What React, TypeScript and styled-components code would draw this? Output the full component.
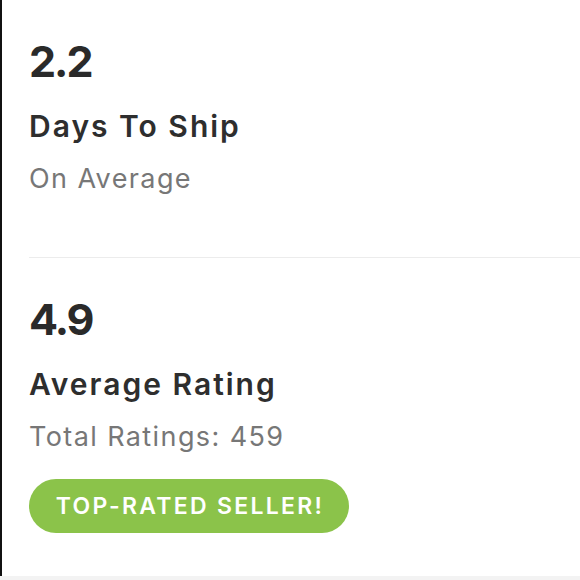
import React from "react";
import styled, { createGlobalStyle } from "styled-components";

const GlobalStyle = createGlobalStyle`
  html, body {
    margin: 0;
    padding: 0;
    background: #f3f3f3;
  }
  body {
    font-family: Inter, Lato, "Open Sans", Arial, sans-serif;
    -webkit-font-smoothing: antialiased;
  }
`;

const Card = styled.div`
  width: 578px;
  height: 576px;
  background: #ffffff;
  border-left: 2px solid #111111;
  display: flex;
  flex-direction: column;
`;

const Section = styled.section<{ $bottom: number }>`
  padding: 39px 0 ${(p) => p.$bottom}px 27px;
  display: flex;
  flex-direction: column;
  align-items: flex-start;
`;

const Value = styled.div`
  font-size: 43px;
  line-height: 44px;
  font-weight: 700;
  color: #2a2a2a;
  letter-spacing: -2px;
`;

const Label = styled.div`
  margin-top: 23px;
  font-size: 30px;
  line-height: 40px;
  font-weight: 600;
  color: #2e2e2e;
  letter-spacing: 2px;
`;

const Sub = styled.div`
  margin-top: 15px;
  font-size: 27px;
  line-height: 36px;
  font-weight: 400;
  color: #777777;
  letter-spacing: 1.4px;
`;

const Badge = styled.div`
  margin-top: 24px;
  height: 54px;
  width: 320px;
  box-sizing: border-box;
  padding-left: 2px;
  border-radius: 27px;
  background: #8bc34a;
  color: #ffffff;
  display: flex;
  align-items: center;
  justify-content: center;
  font-size: 23px;
  font-weight: 600;
  letter-spacing: 2.3px;
`;

const Divider = styled.div`
  height: 1px;
  background: #ececec;
  margin-left: 27px;
`;

export default function App() {
  return (
    <>
      <GlobalStyle />
      <Card>
        <Section $bottom={60}>
          <Value>2.2</Value>
          <Label>Days To Ship</Label>
          <Sub>On Average</Sub>
        </Section>
        <Divider />
        <Section $bottom={0}>
          <Value>4.9</Value>
          <Label>Average Rating</Label>
          <Sub>Total Ratings: 459</Sub>
          <Badge>TOP-RATED SELLER!</Badge>
        </Section>
      </Card>
    </>
  );
}
